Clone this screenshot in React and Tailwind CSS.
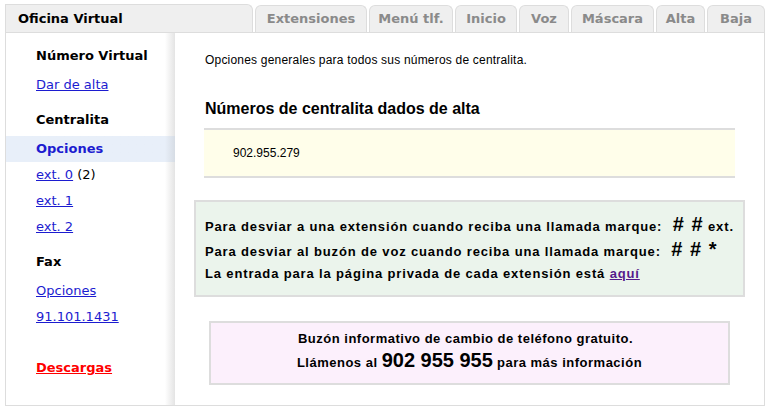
import React from "react";

const tabs = [
  { label: "Extensiones", w: "w-[112px]" },
  { label: "Menú tlf.", w: "w-[84px]" },
  { label: "Inicio", w: "w-[62px]" },
  { label: "Voz", w: "w-[50px]" },
  { label: "Máscara", w: "w-[83px]" },
  { label: "Alta", w: "w-[49px]" },
  { label: "Baja", w: "w-[58px]" },
];

function SideLink({ children, className = "" }) {
  return (
    <a href="#" className={"text-[#1c1cd0] underline " + className}>
      {children}
    </a>
  );
}

export default function App() {
  return (
    <div className="w-[770px] h-[411px] bg-white pt-[5px] px-[5px] font-['DejaVu_Sans',sans-serif] text-[13px] text-black">
      {/* tab bar */}
      <div className="flex items-end h-[28px] gap-[2px] border-b border-[#dddddd]">
        <div className="w-[248px] h-[28px] flex items-center pl-[12px] bg-[#efefef] border border-b-0 border-[#dddddd] rounded-tr-[6px] font-bold">
          Oficina Virtual
        </div>
        {tabs.map((t) => (
          <div
            key={t.label}
            className={
              t.w +
              " h-[27px] flex items-center justify-center bg-[#efefef] border border-b-0 border-[#dddddd] rounded-t-[6px] font-bold text-[#8a8a8a]"
            }
          >
            {t.label}
          </div>
        ))}
      </div>

      {/* body */}
      <div className="flex h-[373px] border-l border-r border-b border-[#dddddd]">
        {/* sidebar */}
        <div className="w-[169px] flex flex-col pt-[14px] bg-gradient-to-r from-white from-[94%] to-[#e4e4e4]">
          <div className="pl-[30px] font-bold h-[18px] leading-[18px]">Número Virtual</div>
          <div className="pl-[30px] mt-[11px] h-[18px] leading-[18px]">
            <SideLink>Dar de alta</SideLink>
          </div>
          <div className="pl-[30px] mt-[17px] font-bold h-[18px] leading-[18px]">Centralita</div>
          <div className="mt-[7px] pl-[30px] h-[26px] leading-[26px] bg-gradient-to-r from-[#e8eff9] from-[94%] to-[#d6dce4] font-bold text-[#1c1cd0]">
            Opciones
          </div>
          <div className="pl-[30px] mt-[4px] h-[18px] leading-[18px]">
            <SideLink>ext. 0</SideLink> (2)
          </div>
          <div className="pl-[30px] mt-[8px] h-[18px] leading-[18px]">
            <SideLink>ext. 1</SideLink>
          </div>
          <div className="pl-[30px] mt-[8px] h-[18px] leading-[18px]">
            <SideLink>ext. 2</SideLink>
          </div>
          <div className="pl-[30px] mt-[17px] font-bold h-[18px] leading-[18px]">Fax</div>
          <div className="pl-[30px] mt-[11px] h-[18px] leading-[18px]">
            <SideLink>Opciones</SideLink>
          </div>
          <div className="pl-[30px] mt-[8px] h-[18px] leading-[18px]">
            <SideLink>91.101.1431</SideLink>
          </div>
          <div className="pl-[30px] mt-[33px] h-[18px] leading-[18px]">
            <a href="#" className="text-[#ff0000] underline font-bold">Descargas</a>
          </div>
        </div>

        {/* content */}
        <div className="flex-1 font-['Liberation_Sans',Arial,sans-serif] pt-[20px]">
          <p className="ml-[30px] text-[12px] leading-[14px] tracking-[0.2px]">
            Opciones generales para todos sus números de centralita.
          </p>
          <h2 className="ml-[30px] mt-[33px] text-[16px] font-bold leading-[18px]">
            Números de centralita dados de alta
          </h2>
          <div className="ml-[29px] mr-[29px] mt-[10px] h-[50px] bg-[#fffeea] border-y-2 border-[#dddddd] flex items-center pl-[29px] text-[12px]">
            902.955.279
          </div>

          <div className="ml-[19px] mr-[19px] mt-[22px] h-[97px] bg-[#ebf4ec] border-2 border-[#dddddd] pl-[9px] pt-[11px] text-[13px] font-bold leading-[22px] tracking-[0.85px]">
            <div>
              Para desviar a una extensión cuando reciba una llamada marque:{" "}
              <span className="text-[20px] ml-[6px] tracking-[1px]"># #</span> ext.
            </div>
            <div>
              Para desviar al buzón de voz cuando reciba una llamada marque:{" "}
              <span className="text-[20px] ml-[6px] tracking-[1px]"># # *</span>
            </div>
            <div>
              La entrada para la página privada de cada extensión está{" "}
              <a href="#" className="text-[#551a8b] underline">aquí</a>
            </div>
          </div>

          <div className="ml-[34px] mr-[34px] mt-[24px] h-[64px] bg-[#fcf0fc] border-2 border-[#dddddd] flex flex-col items-center justify-center pb-[3px] text-[13px] font-bold tracking-[0.5px]">
            <div className="leading-[20px] pr-[8px]">Buzón informativo de cambio de teléfono gratuito.</div>
            <div className="leading-[22px]">
              Llámenos al <span className="text-[20px] tracking-[0px]">902 955 955</span> para más información
            </div>
          </div>
        </div>
      </div>
    </div>
  );
}
